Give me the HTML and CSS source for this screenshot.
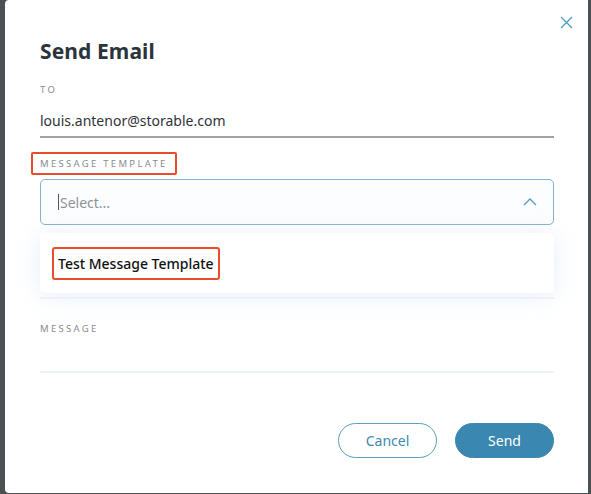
FILE: index.html
```html
<!DOCTYPE html>
<html>
<head>
<meta charset="utf-8">
<link rel="stylesheet" href="styles.css">
</head>
<body>
<div class="page">
  <div class="backdrop-left"></div>
  <div class="modal">
    <button class="close" aria-label="Close">
      <svg width="13" height="13" viewBox="0 0 13 13"><path d="M1 1L12 12M12 1L1 12" stroke="#4f9bc8" stroke-width="1.3" fill="none"/></svg>
    </button>
    <h1 class="title">Send Email</h1>
    <div class="field to">
      <div class="label">TO</div>
      <div class="value">louis.antenor@storable.com</div>
    </div>
    <div class="field template">
      <div class="label"><span class="hl-label">MESSAGE TEMPLATE</span></div>
      <div class="select">
        <span class="caret"></span><span class="placeholder">Select...</span>
        <svg class="chev" width="14" height="8" viewBox="0 0 14 8"><path d="M1 7L7 1L13 7" stroke="#4f9bc8" stroke-width="1.3" fill="none"/></svg>
      </div>
      <div class="menu">
        <div class="option"><span class="hl-option">Test Message Template</span></div>
      </div>
      <div class="hidden-line"></div>
    </div>
    <div class="field message">
      <div class="label">MESSAGE</div>
      <div class="msg-line"></div>
    </div>
    <div class="actions">
      <button class="btn cancel">Cancel</button>
      <button class="btn send">Send</button>
    </div>
  </div>
  <div class="backdrop-right"></div>
</div>
</body>
</html>
```
FILE: styles.css
```css
* { box-sizing: border-box; }
html, body { margin: 0; padding: 0; }
body {
  width: 591px; height: 494px; overflow: hidden;
  background: #4b5053;
  font-family: "Noto Sans", "Open Sans", sans-serif;
}
.page { display: flex; height: 494px; }
.backdrop-left { width: 5px; flex: none; background: #4b5053; }
.backdrop-right { width: 3px; flex: none; background: #4b5053; }
.modal {
  position: relative;
  flex: 1;
  background: #fff;
  border-radius: 4px 0 0 4px;
  padding: 37px 34px 0 35px;
  margin-bottom: 1px;
}
.close {
  position: absolute; top: 16px; right: 15px;
  border: 0; background: none; padding: 0; width: 13px; height: 13px;
  display: block;
}
.close svg { display: block; }
.title {
  margin: 0; font-size: 21px; font-weight: 700; color: #2b333c;
  line-height: 28px; letter-spacing: 0.1px;
}
.label {
  font-size: 9.5px; letter-spacing: 2.3px; color: #868c91;
  line-height: 13px;
}
.to { margin-top: 18px; }
.value {
  margin-top: 15px;
  font-size: 14px; color: #2f3439; line-height: 20px;
  padding-bottom: 5px;
  border-bottom: 2px solid #a0a3a6;
}
.template { margin-top: 14px; }
.hl-label {
  display: inline-block;
  border: 2px solid #ec4a2c; border-radius: 2px;
  padding: 3px 7px 3px 7px; margin-left: -9px;
  line-height: 13px;
}
.select {
  margin-top: 4px;
  height: 46px;
  border: 1px solid #7fb3d1; border-radius: 5px;
  display: flex; align-items: center;
  padding: 0 16px 0 17px;
  background: #fcfdfe;
}
.caret { width: 1px; height: 16px; background: #555; margin-right: 1px; }
.placeholder { font-size: 14px; color: #8d9297; flex: 1; }
.chev { display: block; }
.menu {
  margin-top: 8px;
  height: 60px;
  border-radius: 5px;
  background: #fff;
  box-shadow: 0 2px 24px rgba(190, 212, 230, 0.38);
  display: flex; align-items: center;
  padding: 0 12px;
}
.hl-option {
  display: inline-block;
  border: 2px solid #ec4a2c; border-radius: 3px;
  padding: 5px 4px 5px 4px;
  font-size: 14px; font-weight: 500; color: #111;
  line-height: 19px;
}
.hidden-line { height: 2px; background: #eef2f6; margin-top: 4px; }
.message { margin-top: 23px; }
.msg-line { height: 2px; background: #eef3f7; margin-top: 36px; }
.actions {
  display: flex; justify-content: flex-end; gap: 18px;
  margin-top: 50px;
}
.btn {
  width: 99px; height: 35px; border-radius: 18px;
  font-family: inherit; font-size: 14px;
  cursor: pointer;
}
.cancel { background: #fff; border: 1px solid #5b9dc2; color: #3d88b2; }
.send { background: #3a88b1; border: 1px solid #3a88b1; color: #fff; }
```
